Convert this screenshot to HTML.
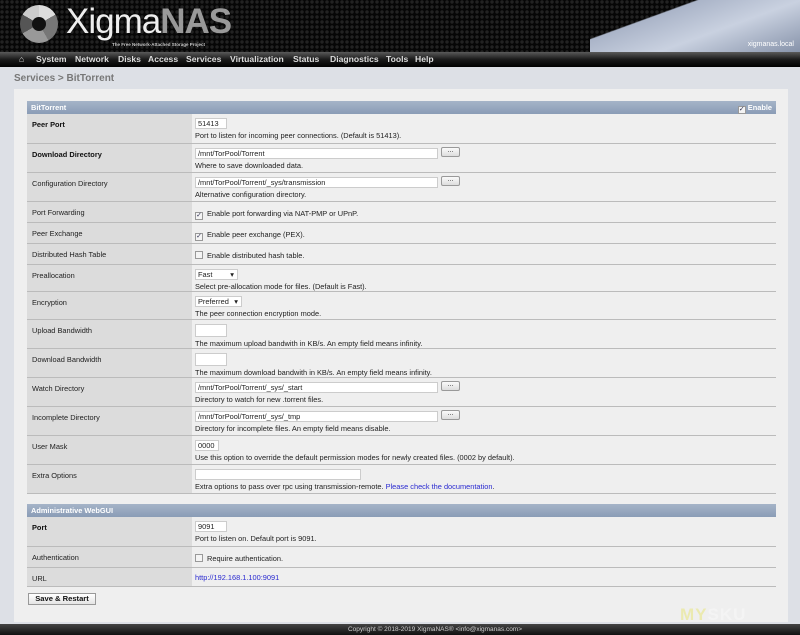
<!DOCTYPE html>
<html><head><meta charset="utf-8"><style>
*{margin:0;padding:0;box-sizing:border-box}
body{width:800px;height:635px;overflow:hidden;background:#dde0e6;font-family:"Liberation Sans","DejaVu Sans",sans-serif;font-size:7.4px;color:#222;position:relative}
#hdr{position:absolute;left:0;top:0;width:800px;height:52px;background:radial-gradient(circle at 2px 2px,#222 1.5px,#060606 2px) 0 0/5px 5px}
#hdd{position:absolute;right:0;top:0;width:210px;height:52px;background:linear-gradient(160deg,#0000 30%,#aab4c8 31%,#c9d1e0 60%,#8793aa 100%)}
#nav{position:absolute;left:0;top:52px;width:800px;height:15px;background:linear-gradient(#5a5a5a,#1a1a1a 50%,#000);color:#ddd;font-weight:bold;font-size:8.6px;line-height:15px}
#nav span{position:absolute;top:0}
#crumb{position:absolute;left:14px;top:73px;font-size:10px;font-weight:bold;color:#777}
#panel{position:absolute;left:14px;top:89px;width:774px;height:533px;background:#efefef}
.h{position:absolute;left:27px;width:749px;height:13px;background:linear-gradient(#a5b4c8,#8a9cb6);color:#fff;font-weight:bold;font-size:7.4px;line-height:13px;padding-left:4px}
.r{position:absolute;left:27px;width:749px;border-bottom:1px solid #bbb}
.l{position:absolute;left:0;top:0;bottom:0;width:165px;background:#dcdcdc;padding:6px 0 0 5px}
.b{font-weight:bold;color:#111}
.v{position:absolute;left:168px;top:4px}
.in{display:block;height:11px;background:#fff;border:1px solid #ccc;padding-left:2px;line-height:9px;margin-bottom:2px}
.btn{position:absolute;top:-1px;left:246px;width:19px;height:10px;border:1px solid #999;border-radius:2px;background:linear-gradient(#fafafa,#ddd);text-align:center;line-height:5px;font-size:7px}
.cb{display:inline-block;width:8px;height:8px;border:1px solid #999;background:#f4f4f4;vertical-align:-1px;margin-right:4px;font-size:7px;line-height:6px;text-align:center;color:#335}
a{color:#2a2ad0;text-decoration:none}
#foot{position:absolute;left:0;top:624px;width:800px;height:11px;background:linear-gradient(#444,#111);color:#ccc;font-size:6.5px;line-height:11px;text-align:center;padding-left:70px}
</style></head><body>
<div id="hdr"><div id="hdd"></div>
<div style="position:absolute;left:20px;top:5px;width:38px;height:38px;border-radius:50%;background:conic-gradient(#ddd 0 60deg,#777 60deg 150deg,#999 150deg 240deg,#555 240deg 300deg,#ccc 300deg);"></div>
<div style="position:absolute;left:32px;top:17px;width:14px;height:14px;border-radius:50%;background:#111"></div>
<div style="position:absolute;left:66px;top:2px;font-size:35px;color:#eee;letter-spacing:-1px;font-family:'Liberation Sans Narrow','Liberation Sans',sans-serif">Xigma<b style="color:#999">NAS</b></div>
<div style="position:absolute;left:112px;top:42px;font-size:4.5px;color:#ccc;font-weight:bold">The Free Network-Attached Storage Project</div>
<div style="position:absolute;right:6px;top:41px;font-size:7px;color:#fff">xigmanas.local</div></div>
<div id="nav"><span style="left:19px">&#8962;</span><span style="left:36px">System</span><span style="left:75px">Network</span><span style="left:118px">Disks</span><span style="left:148px">Access</span><span style="left:186px">Services</span><span style="left:230px">Virtualization</span><span style="left:293px">Status</span><span style="left:330px">Diagnostics</span><span style="left:386px">Tools</span><span style="left:415px">Help</span></div>
<div id="crumb">Services &gt; BitTorrent</div>
<div id="panel"></div>
<div class="h" style="top:101px">BitTorrent<span style="position:absolute;right:4px"><span class="cb" style="margin-right:2px">✓</span>Enable</span></div>

<div class="r" style="top:114px;height:30px"><div class="l b">Peer Port</div><div class="v"><span class="in" style="width:32px">51413</span>Port to listen for incoming peer connections. (Default is 51413).</div></div>
<div class="r" style="top:144px;height:29px"><div class="l b">Download Directory</div><div class="v"><span class="in" style="width:243px">/mnt/TorPool/Torrent</span>Where to save downloaded data.<span class="btn">...</span></div></div>
<div class="r" style="top:173px;height:29px"><div class="l">Configuration Directory</div><div class="v"><span class="in" style="width:243px">/mnt/TorPool/Torrent/_sys/transmission</span>Alternative configuration directory.<span class="btn">...</span></div></div>
<div class="r" style="top:202px;height:21px"><div class="l">Port Forwarding</div><div class="v" style="top:7px"><span class="cb">✓</span>Enable port forwarding via NAT-PMP or UPnP.</div></div>
<div class="r" style="top:223px;height:21px"><div class="l">Peer Exchange</div><div class="v" style="top:7px"><span class="cb">✓</span>Enable peer exchange (PEX).</div></div>
<div class="r" style="top:244px;height:21px"><div class="l">Distributed Hash Table</div><div class="v" style="top:7px"><span class="cb"></span>Enable distributed hash table.</div></div>
<div class="r" style="top:265px;height:27px"><div class="l">Preallocation</div><div class="v"><span class="in" style="width:43px">Fast <span style="float:right;margin-right:3px">▾</span></span>Select pre-allocation mode for files. (Default is Fast).</div></div>
<div class="r" style="top:292px;height:28px"><div class="l">Encryption</div><div class="v"><span class="in" style="width:47px">Preferred <span style="float:right;margin-right:3px">▾</span></span>The peer connection encryption mode.</div></div>
<div class="r" style="top:320px;height:29px"><div class="l">Upload Bandwidth</div><div class="v"><span class="in" style="width:32px;height:13px">&nbsp;</span>The maximum upload bandwith in KB/s. An empty field means infinity.</div></div>
<div class="r" style="top:349px;height:29px"><div class="l">Download Bandwidth</div><div class="v"><span class="in" style="width:32px;height:13px">&nbsp;</span>The maximum download bandwith in KB/s. An empty field means infinity.</div></div>
<div class="r" style="top:378px;height:29px"><div class="l">Watch Directory</div><div class="v"><span class="in" style="width:243px">/mnt/TorPool/Torrent/_sys/_start</span>Directory to watch for new .torrent files.<span class="btn">...</span></div></div>
<div class="r" style="top:407px;height:29px"><div class="l">Incomplete Directory</div><div class="v"><span class="in" style="width:243px">/mnt/TorPool/Torrent/_sys/_tmp</span>Directory for incomplete files. An empty field means disable.<span class="btn">...</span></div></div>
<div class="r" style="top:436px;height:29px"><div class="l">User Mask</div><div class="v"><span class="in" style="width:24px">0000</span>Use this option to override the default permission modes for newly created files. (0002 by default).</div></div>
<div class="r" style="top:465px;height:29px"><div class="l">Extra Options</div><div class="v"><span class="in" style="width:166px">&nbsp;</span>Extra options to pass over rpc using transmission-remote. <a>Please check the documentation</a>.</div></div>

<div class="h" style="top:504px">Administrative WebGUI</div>
<div class="r" style="top:517px;height:30px"><div class="l b">Port</div><div class="v"><span class="in" style="width:32px">9091</span>Port to listen on. Default port is 9091.</div></div>
<div class="r" style="top:547px;height:21px"><div class="l">Authentication</div><div class="v" style="top:7px"><span class="cb"></span>Require authentication.</div></div>
<div class="r" style="top:568px;height:19px"><div class="l">URL</div><div class="v" style="top:5px"><a>http://192.168.1.100:9091</a></div></div>
<div style="position:absolute;left:28px;top:593px;width:68px;height:12px;border:1px solid #999;background:linear-gradient(#fff,#e4e4e4);font-weight:bold;font-size:7.6px;line-height:10px;text-align:center;color:#111">Save &amp; Restart</div>
<div style="position:absolute;left:680px;top:605px;font-size:17px;font-weight:bold;color:#ebeab0;letter-spacing:1px">MY<span style="color:#f4f4f4">SKU</span></div>
<div id="foot">Copyright © 2018-2019 XigmaNAS® &lt;info@xigmanas.com&gt;</div>
</body></html>
